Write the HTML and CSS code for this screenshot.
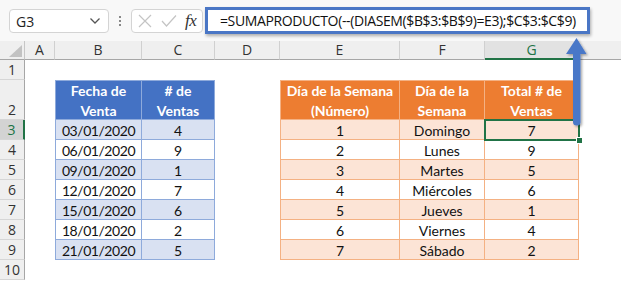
FILE: index.html
```html
<!DOCTYPE html>
<html lang="es">
<head>
  <meta charset="UTF-8">
  <title>SUMAPRODUCTO - DIASEM</title>
  <link rel="stylesheet" href="styles.css">
</head>
<body>
  <div class="app">
    <!-- barra de fórmulas -->
    <div class="toolbar">
      <div class="namebox">
        <span>G3</span>
        <svg class="chev" width="12" height="8" viewBox="0 0 12 8"><path d="M1.5 1.5 L6 6 L10.5 1.5" fill="none" stroke="#555" stroke-width="1.3"/></svg>
      </div>
      <div class="dots"><i></i><i></i><i></i></div>
      <div class="fxbox">
        <svg width="14" height="14" viewBox="0 0 14 14"><path d="M1 1 L13 13 M13 1 L1 13" stroke="#c4c4c4" stroke-width="1.2"/></svg>
        <svg width="16" height="14" viewBox="0 0 16 14"><path d="M1 7 L5.5 12 L15 1.5" fill="none" stroke="#c4c4c4" stroke-width="1.2"/></svg>
        <span class="fx">fx</span>
      </div>
      <div class="formula">=SUMAPRODUCTO(--(DIASEM($B$3:$B$9)=E3);$C$3:$C$9)</div>
    </div>

    <!-- hoja -->
    <div class="sheet">
      <div class="corner"><span class="tri"></span></div>
      <div class="colhead">A</div>
      <div class="colhead">B</div>
      <div class="colhead">C</div>
      <div class="colhead">D</div>
      <div class="colhead">E</div>
      <div class="colhead">F</div>
      <div class="colhead active">G</div>
      <div class="colhead last"></div>

      <div class="rowhead r1">1</div>
      <div class="rowhead r2 tall">2</div>
      <div class="rowhead r3 active">3</div>
      <div class="rowhead r4">4</div>
      <div class="rowhead r5">5</div>
      <div class="rowhead r6">6</div>
      <div class="rowhead r7">7</div>
      <div class="rowhead r8">8</div>
      <div class="rowhead r9">9</div>
      <div class="rowhead r10">10</div>

      <div class="tbl blue">
        <div class="th">Fecha de<br>Venta</div>
        <div class="th"># de<br>Ventas</div>
        <div class="td date">03/01/2020</div><div class="td">4</div>
        <div class="td date">06/01/2020</div><div class="td">9</div>
        <div class="td date">09/01/2020</div><div class="td">1</div>
        <div class="td date">12/01/2020</div><div class="td">7</div>
        <div class="td date">15/01/2020</div><div class="td">6</div>
        <div class="td date">18/01/2020</div><div class="td">2</div>
        <div class="td date">21/01/2020</div><div class="td">5</div>
      </div>

      <div class="tbl orange">
        <div class="th">Día de la Semana<br>(Número)</div>
        <div class="th">Día de la<br>Semana</div>
        <div class="th">Total # de<br>Ventas</div>
        <div class="td">1</div><div class="td">Domingo</div><div class="td">7</div>
        <div class="td">2</div><div class="td">Lunes</div><div class="td">9</div>
        <div class="td">3</div><div class="td">Martes</div><div class="td">5</div>
        <div class="td">4</div><div class="td">Miércoles</div><div class="td">6</div>
        <div class="td">5</div><div class="td">Jueves</div><div class="td">1</div>
        <div class="td">6</div><div class="td">Viernes</div><div class="td">4</div>
        <div class="td">7</div><div class="td">Sábado</div><div class="td">2</div>
      </div>
    </div>

    <!-- celda activa y flecha -->
    <div class="selection"><span class="handle"></span></div>
    <svg class="arrow" width="40" height="100" viewBox="0 0 40 100">
      <defs>
        <filter id="sh" x="-50%" y="-20%" width="200%" height="140%">
          <feDropShadow dx="1.5" dy="1.5" stdDeviation="1.2" flood-color="#000" flood-opacity="0.35"/>
        </filter>
      </defs>
      <g filter="url(#sh)">
        <path d="M13 23 L20.5 23 L20.5 92 Q20.5 95.5 16.75 95.5 Q13 95.5 13 92 Z" fill="#4a78c8"/>
        <path d="M16.5 8 L26.5 24 L6 24 Z" fill="#4a78c8"/>
      </g>
    </svg>
  </div>
</body>
</html>
```

FILE: styles.css
```css
/* base */
html, body { margin: 0; padding: 0; background: #fff; }
body { width: 621px; height: 282px; overflow: hidden; }
.app { position: relative; width: 621px; height: 282px; overflow: hidden; font-family: 'Open Sans', 'Noto Sans', sans-serif; }

/* barra de fórmulas */
.toolbar {
  height: 41px; box-sizing: border-box; background: #f8f8f8;
  display: flex; align-items: center; padding-left: 9px;
}
.namebox {
  width: 100px; height: 24px; box-sizing: border-box; margin-top: 1px;
  background: #fff; border: 1px solid #d4d4d4; border-radius: 4px;
  display: flex; align-items: center; justify-content: space-between;
  padding: 0 7px 0 6px; font-size: 14px; color: #222;
}
.dots { width: 22px; display: flex; flex-direction: column; align-items: center; gap: 2px; margin-top: 1px; }
.dots i { width: 2px; height: 2px; background: #888; display: block; }
.fxbox {
  width: 72px; height: 24px; box-sizing: border-box; margin-top: 1px;
  background: #fff; border: 1px solid #d4d4d4; border-radius: 4px;
  display: flex; align-items: center; gap: 9px; padding-left: 6px;
}
.fx { font-family: 'Liberation Serif', serif; font-style: italic; font-size: 17px; color: #333; margin-left: -1px; letter-spacing: -0.5px; }
.formula {
  width: 385px; height: 27px; box-sizing: border-box; margin-left: 2px;
  background: #fff; border: 3px solid #4a76c5;
  box-shadow: 1px 2px 3px rgba(0,0,0,0.3);
  font-size: 14px; line-height: 21px; color: #111; padding-left: 12px;
  white-space: nowrap; letter-spacing: -0.38px;
}

/* hoja */
.sheet {
  display: grid;
  grid-template-columns: 25px 30px 87px 73px 65px 120px 85px 94px 1fr;
  grid-template-rows: 19px 20px 40px repeat(8, 20px);
}
.corner { background: #efefef; border-right: 1px solid #c6c6c6; border-bottom: 1px solid #a6a6a6; position: relative; }
.tri { position: absolute; right: 2px; bottom: 2px; width: 0; height: 0; border-left: 13px solid transparent; border-bottom: 12px solid #c2c2c2; }
.colhead {
  background: #efefef; border-right: 1px solid #d0d0d0; border-bottom: 1px solid #a6a6a6;
  font-size: 14px; color: #333; text-align: center; line-height: 18px;
}
.colhead.active { background: #e2e2e2; color: #217346; border-bottom: 2px solid #217346; line-height: 18px; }
.colhead.last { border-right: none; }
.rowhead {
  grid-column: 1; background: #efefef;
  border-right: 1px solid #a6a6a6; border-bottom: 1px solid #d6d6d6;
  font-size: 14px; color: #333; text-align: center;
  display: flex; align-items: flex-end; justify-content: center; line-height: 19px;
}
.rowhead.active { background: #d3d3d3; color: #217346; border-right: 2px solid #217346; }
.r1 { grid-row: 2; } .r2 { grid-row: 3; } .r3 { grid-row: 4; } .r4 { grid-row: 5; } .r5 { grid-row: 6; }
.r6 { grid-row: 7; } .r7 { grid-row: 8; } .r8 { grid-row: 9; } .r9 { grid-row: 10; } .r10 { grid-row: 11; }

/* tablas */
.tbl {
  grid-row: 3 / 11; display: grid; box-sizing: border-box;
  grid-template-rows: 40px repeat(7, 20px);
  font-family: 'Lato', 'Liberation Sans', sans-serif; font-size: 14px; color: #111;
}
.tbl .th, .tbl .td { display: flex; align-items: center; justify-content: center; text-align: center; box-sizing: border-box; }
.tbl .th { color: #fff; font-weight: bold; line-height: 20px; padding-top: 2px; }
.tbl .td { line-height: 20px; padding-top: 2px; }
.tbl .date { letter-spacing: -0.45px; }

.blue { grid-column: 3 / 5; grid-template-columns: 87px 73px; width: 160px; }
.blue .th, .blue .td { border-right: 1px solid #8eaadb; border-bottom: 1px solid #8eaadb; }
.blue .th:nth-child(1), .blue .td:nth-child(odd) { border-left: 1px solid #8eaadb; }
.blue .th { background: #4472c4; border-top: 1px solid #8eaadb; }
.blue .td:nth-child(4n+3), .blue .td:nth-child(4n+4) { background: #d9e1f2; }

.orange { grid-column: 6 / 9; grid-template-columns: 120px 85px 94px; width: 300px; }
.orange .th, .orange .td { border-right: 1px solid #f4b183; border-bottom: 1px solid #f4b183; }
.orange .th:nth-child(1), .orange .td:nth-child(3n+1) { border-left: 1px solid #f4b183; }
.orange .th { background: #ed7d31; border-top: 1px solid #f4b183; }
.orange .td:nth-child(6n+4), .orange .td:nth-child(6n+5), .orange .td:nth-child(6n+6) { background: #fce4d6; }

/* celda activa */
.selection {
  position: absolute; left: 484px; top: 119px; width: 96px; height: 22px;
  box-sizing: border-box; border: 2px solid #217346;
}
.handle { position: absolute; right: -5px; bottom: -5px; width: 5px; height: 5px; background: #217346; border: 1px solid #fff; }

/* flecha */
.arrow { position: absolute; left: 560px; top: 30px; }
```
